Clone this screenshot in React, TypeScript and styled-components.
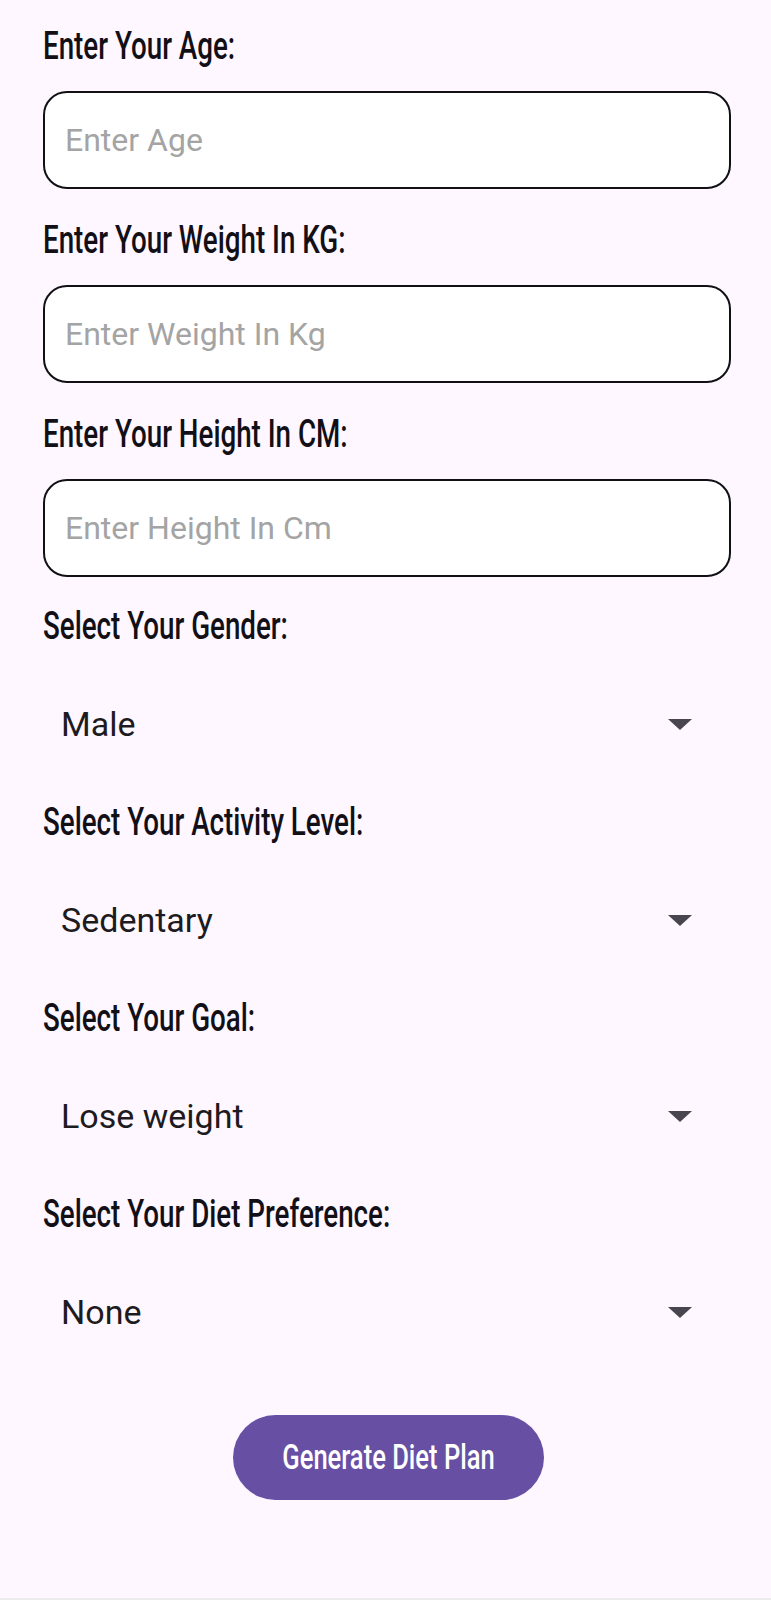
import React from "react";
import styled, { createGlobalStyle } from "styled-components";

const Global = createGlobalStyle`
  html, body {
    margin: 0;
    padding: 0;
    background: #fef7ff;
  }
  body {
    font-family: Roboto, "Liberation Sans", sans-serif;
  }
  * { box-sizing: border-box; }
`;

const Page = styled.main`
  min-height: 1600px;
  padding: 24px 40px 0 43px;
  display: flex;
  flex-direction: column;
  background: #fef7ff;
  border-bottom: 2px solid #ececec;
`;

const Field = styled.div<{ $gap: number; $after: number }>`
  display: flex;
  flex-direction: column;
  gap: ${(p) => p.$gap}px;
  margin-bottom: ${(p) => p.$after}px;
`;

/* Roboto squeezed horizontally to imitate the tall condensed label face */
const Condensed = styled.span<{ $origin?: string }>`
  display: inline-block;
  font-family: Roboto, "Liberation Sans", sans-serif;
  font-weight: 500;
  white-space: nowrap;
  transform: scaleX(0.73);
  transform-origin: ${(p) => p.$origin || "left"} center;
`;

const Label = styled.label`
  display: block;
  font-size: 38px;
  line-height: 44px;
  height: 44px;
  color: #121016;
`;

const TextInput = styled.input`
  height: 98px;
  width: 100%;
  border: 2px solid #111014;
  border-radius: 24px;
  background: #ffffff;
  padding: 0 20px;
  font: 400 32px Roboto, "Liberation Sans", sans-serif;
  color: #1d1b20;
  outline: none;
  &::placeholder {
    color: #a4a4a4;
  }
`;

const SelectBox = styled.div`
  height: 104px;
  display: flex;
  align-items: center;
  justify-content: space-between;
  padding: 0 39px 0 18px;
  font: 400 34px Roboto, "Liberation Sans", sans-serif;
  color: #1d1b20;
  cursor: pointer;
`;

const Arrow = styled.svg`
  width: 24px;
  height: 11px;
  display: block;
`;

const Button = styled.button`
  align-self: center;
  display: flex;
  align-items: center;
  justify-content: center;
  margin-top: 51px;
  margin-left: 3px;
  width: 311px;
  height: 85px;
  padding: 0;
  border: none;
  border-radius: 43px;
  background: #6750a4;
  color: #ffffff;
  font-size: 35px;
  line-height: 40px;
  cursor: pointer;
`;

const inputs = [
  { label: "Enter Your Age:", placeholder: "Enter Age", after: 29 },
  { label: "Enter Your Weight In KG:", placeholder: "Enter Weight In Kg", after: 29 },
  { label: "Enter Your Height In CM:", placeholder: "Enter Height In Cm", after: 27 },
];

const selects = [
  { label: "Select Your Gender:", value: "Male" },
  { label: "Select Your Activity Level:", value: "Sedentary" },
  { label: "Select Your Goal:", value: "Lose weight" },
  { label: "Select Your Diet Preference:", value: "None" },
];

export default function App() {
  return (
    <>
      <Global />
      <Page>
        {inputs.map((f) => (
          <Field key={f.label} $gap={23} $after={f.after}>
            <Label>
              <Condensed>{f.label}</Condensed>
            </Label>
            <TextInput placeholder={f.placeholder} />
          </Field>
        ))}
        {selects.map((s, i) => (
          <Field key={s.label} $gap={24} $after={i === selects.length - 1 ? 0 : 24}>
            <Label>
              <Condensed>{s.label}</Condensed>
            </Label>
            <SelectBox>
              <span>{s.value}</span>
              <Arrow viewBox="0 0 24 11">
                <polygon points="0,0 24,0 12,11" fill="#49454f" />
              </Arrow>
            </SelectBox>
          </Field>
        ))}
        <Button>
          <Condensed $origin="center">Generate Diet Plan</Condensed>
        </Button>
      </Page>
    </>
  );
}
